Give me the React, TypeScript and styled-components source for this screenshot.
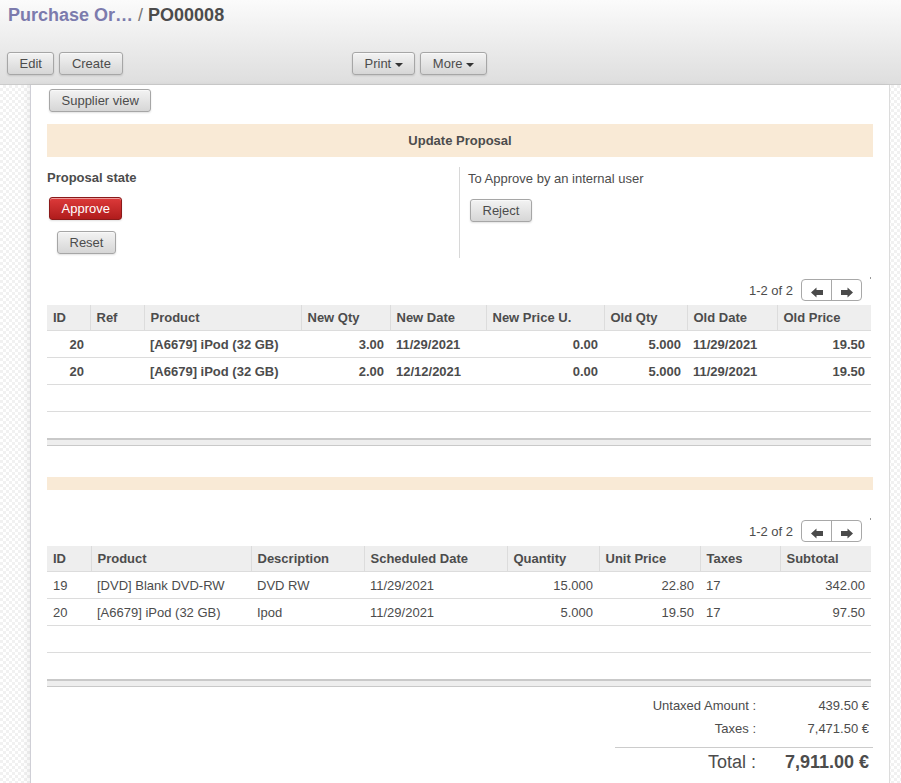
import styled, { createGlobalStyle } from 'styled-components'

const GlobalStyle = createGlobalStyle`
  html, body {
    margin: 0;
    padding: 0;
    background: #fff;
  }
  body {
    font-family: "Liberation Sans", Arial, Helvetica, sans-serif;
    font-size: 13px;
    color: #4c4c4c;
  }
`

interface Column {
  label: string
  width: number
  align?: 'left' | 'right'
}

const proposalColumns: Column[] = [
  { label: 'ID', width: 43, align: 'right' },
  { label: 'Ref', width: 54 },
  { label: 'Product', width: 157 },
  { label: 'New Qty', width: 89, align: 'right' },
  { label: 'New Date', width: 96 },
  { label: 'New Price U.', width: 118, align: 'right' },
  { label: 'Old Qty', width: 83, align: 'right' },
  { label: 'Old Date', width: 90 },
  { label: 'Old Price', width: 94, align: 'right' },
]

const proposalRows = [
  ['20', '', '[A6679] iPod (32 GB)', '3.00', '11/29/2021', '0.00', '5.000', '11/29/2021', '19.50'],
  ['20', '', '[A6679] iPod (32 GB)', '2.00', '12/12/2021', '0.00', '5.000', '11/29/2021', '19.50'],
]

const lineColumns: Column[] = [
  { label: 'ID', width: 44 },
  { label: 'Product', width: 160 },
  { label: 'Description', width: 113 },
  { label: 'Scheduled Date', width: 143 },
  { label: 'Quantity', width: 92, align: 'right' },
  { label: 'Unit Price', width: 101, align: 'right' },
  { label: 'Taxes', width: 80 },
  { label: 'Subtotal', width: 91, align: 'right' },
]

const lineRows = [
  ['19', '[DVD] Blank DVD-RW', 'DVD RW', '11/29/2021', '15.000', '22.80', '17', '342.00'],
  ['20', '[A6679] iPod (32 GB)', 'Ipod', '11/29/2021', '5.000', '19.50', '17', '97.50'],
]

function Arrow({ dir }: { dir: 'left' | 'right' }): JSX.Element {
  return (
    <svg width="12" height="11" viewBox="0 0 12 11">
      <path
        d={
          dir === 'left'
            ? 'M0 5.5 L5.5 0.5 L5.5 3 L12 3 L12 8 L5.5 8 L5.5 10.5 Z'
            : 'M12 5.5 L6.5 0.5 L6.5 3 L0 3 L0 8 L6.5 8 L6.5 10.5 Z'
        }
        fill="#4a4a4a"
      />
    </svg>
  )
}

function Pager({ spaced = false }: { spaced?: boolean }): JSX.Element {
  return (
    <PagerRow spaced={spaced}>
      <PagerText>1-2 of 2</PagerText>
      <PagerGroup>
        <PagerButton>
          <Arrow dir="left" />
        </PagerButton>
        <PagerButton withDivider>
          <Arrow dir="right" />
        </PagerButton>
      </PagerGroup>
      <PagerDot />
    </PagerRow>
  )
}

function ListTable({
  columns,
  rows,
  bold = false,
}: {
  columns: Column[]
  rows: string[][]
  bold?: boolean
}): JSX.Element {
  return (
    <Table>
      <colgroup>
        {columns.map((c) => (
          <col key={c.label} style={{ width: c.width }} />
        ))}
      </colgroup>
      <thead>
        <tr>
          {columns.map((c, i) => (
            <HeadCell key={c.label} first={i === 0}>
              {c.label}
            </HeadCell>
          ))}
        </tr>
      </thead>
      <tbody>
        {rows.map((r, ri) => (
          <tr key={ri}>
            {r.map((v, i) => (
              <Cell key={i} align={columns[i].align ?? 'left'} bold={bold}>
                {v}
              </Cell>
            ))}
          </tr>
        ))}
        <tr>
          <EmptyCell colSpan={columns.length} />
        </tr>
        <tr>
          <EmptyCell colSpan={columns.length} />
        </tr>
      </tbody>
      <tfoot>
        <tr>
          <FootCell colSpan={columns.length} />
        </tr>
      </tfoot>
    </Table>
  )
}

export default function App(): JSX.Element {
  return (
    <>
      <GlobalStyle />
      <ControlPanel>
        <Breadcrumb>
          <BreadcrumbLink>Purchase Or…</BreadcrumbLink>
          <BreadcrumbSep>/</BreadcrumbSep>
          <BreadcrumbCurrent>PO00008</BreadcrumbCurrent>
        </Breadcrumb>
        <ToolbarRow>
          <ButtonGroup>
            <Button>Edit</Button>
            <Button>Create</Button>
          </ButtonGroup>
          <ButtonGroup>
            <Button>
              Print <Caret />
            </Button>
            <Button>
              More <Caret />
            </Button>
          </ButtonGroup>
        </ToolbarRow>
      </ControlPanel>

      <Canvas>
        <Sheet>
          <SupplierButton>Supplier view</SupplierButton>

          <Band>Update Proposal</Band>

          <ProposalGroup>
            <ProposalLeft>
              <GroupTitle>Proposal state</GroupTitle>
              <Button variant="danger">Approve</Button>
              <ResetButton>Reset</ResetButton>
            </ProposalLeft>
            <ProposalRight>
              <StateText>To Approve by an internal user</StateText>
              <Button>Reject</Button>
            </ProposalRight>
          </ProposalGroup>

          <Pager />
          <ListTable columns={proposalColumns} rows={proposalRows} bold />

          <ThinBand />

          <Pager spaced />
          <ListTable columns={lineColumns} rows={lineRows} />

          <Totals>
            <TotalLabel>Untaxed Amount :</TotalLabel>
            <TotalValue>439.50 €</TotalValue>
            <TotalLabel>Taxes :</TotalLabel>
            <TotalValue>7,471.50 €</TotalValue>
            <TotalRule />
            <GrandLabel>Total :</GrandLabel>
            <GrandValue>7,911.00 €</GrandValue>
          </Totals>
        </Sheet>
      </Canvas>
    </>
  )
}

const ControlPanel = styled.header`
  height: 85px;
  box-sizing: border-box;
  background: linear-gradient(#fbfbfb, #dedede);
  border-bottom: 1px solid #cbcbcb;
  padding: 4px 7px 0;
`

const Breadcrumb = styled.div`
  display: flex;
  align-items: baseline;
  gap: 5px;
  font-size: 18px;
  line-height: 22px;
  padding-left: 1px;
`

const BreadcrumbLink = styled.span`
  color: #7c7bad;
  font-weight: bold;
`

const BreadcrumbSep = styled.span`
  color: #777;
`

const BreadcrumbCurrent = styled.span`
  color: #4c4c4c;
  font-weight: bold;
`

const ToolbarRow = styled.div`
  display: grid;
  grid-template-columns: 345px 1fr;
  margin-top: 26px;
`

const ButtonGroup = styled.div`
  display: flex;
  gap: 5px;
`

const Button = styled.button<{ variant?: 'default' | 'danger' }>`
  height: 23px;
  box-sizing: border-box;
  padding: 0 11.5px;
  border-radius: 3px;
  font-family: inherit;
  font-size: 13px;
  line-height: 21px;
  cursor: pointer;
  white-space: nowrap;
  align-self: flex-start;
  border: 1px solid ${({ variant }) => (variant === 'danger' ? '#8b1a1a' : '#a6a6a6')};
  color: ${({ variant }) => (variant === 'danger' ? '#fff' : '#4c4c4c')};
  background: ${({ variant }) =>
    variant === 'danger'
      ? 'linear-gradient(#dd3a3a, #b01c1c)'
      : 'linear-gradient(#f3f3f3, #d6d6d6)'};
  box-shadow: 0 1px 2px rgba(0, 0, 0, 0.12), inset 0 1px 0 rgba(255, 255, 255, 0.5);
`

const Caret = styled.span`
  display: inline-block;
  width: 0;
  height: 0;
  margin-left: 0;
  vertical-align: middle;
  border-left: 4px solid transparent;
  border-right: 4px solid transparent;
  border-top: 4px solid #333;
`

const Canvas = styled.main`
  display: flex;
  padding: 0 11px 0 30px;
  background-color: #fff;
  background-image: repeating-conic-gradient(#f1f1f1 0 25%, #fff 0 50%);
  background-size: 6px 6px;
  min-height: 698px;
`

const Sheet = styled.section`
  flex: 1;
  display: flex;
  flex-direction: column;
  background: #fff;
  border-left: 1px solid #cfcfd6;
  border-right: 1px solid #dcdcdc;
  box-shadow: -3px 0 6px rgba(0, 0, 0, 0.05);
  padding: 4px 16px 0;
`

const SupplierButton = styled(Button)`
  margin-left: 2px;
`

const Band = styled.div`
  margin-top: 12px;
  height: 33px;
  display: flex;
  align-items: center;
  justify-content: center;
  background: #f9ead6;
  font-weight: bold;
`

const ProposalGroup = styled.div`
  display: grid;
  grid-template-columns: 412px 1fr;
  margin-top: 10px;
  height: 91px;
`

const ProposalLeft = styled.div`
  display: flex;
  flex-direction: column;
  align-items: flex-start;
  gap: 11px;
  padding-top: 3px;

  & > button {
    margin-left: 2px;
  }
`

const GroupTitle = styled.div`
  font-weight: bold;
  line-height: 15px;
  margin-bottom: 1px;
`

const ResetButton = styled(Button)`
  && {
    margin-left: 10px;
  }
`

const ProposalRight = styled.div`
  border-left: 1px solid #d8d8d8;
  padding: 4px 0 0 8px;
  display: flex;
  flex-direction: column;
  align-items: flex-start;
  gap: 13px;

  & > button {
    margin-left: 2px;
  }
`

const StateText = styled.div`
  line-height: 15px;
`

const PagerRow = styled.div<{ spaced: boolean }>`
  display: flex;
  align-items: center;
  justify-content: flex-end;
  margin-top: ${({ spaced }) => (spaced ? '30px' : '21px')};
  margin-bottom: 4px;
  height: 22px;
  position: relative;
`

const PagerText = styled.span`
  margin-right: 8px;
`

const PagerGroup = styled.div`
  display: flex;
  border: 1px solid #a8a8a8;
  border-radius: 4px;
  margin-right: 11px;
  height: 22px;
  box-sizing: border-box;
  overflow: hidden;
  background: #fff;
`

const PagerButton = styled.span<{ withDivider?: boolean }>`
  width: 29px;
  display: flex;
  align-items: center;
  justify-content: center;
  padding-top: 4px;
  border-left: ${({ withDivider }) => (withDivider ? '1px solid #a8a8a8' : 'none')};
`

const PagerDot = styled.span`
  position: absolute;
  right: 2px;
  top: -2px;
  width: 1px;
  height: 2px;
  background: #999;
`

const Table = styled.table`
  width: 824px;
  border-collapse: collapse;
  table-layout: fixed;
`

const HeadCell = styled.th<{ first?: boolean }>`
  height: 25px;
  padding: 0 6px;
  background: #eee;
  text-align: left;
  font-weight: bold;
  border-left: ${({ first }) => (first ? 'none' : '1px solid #dcdcdc')};
  border-bottom: 1px solid #dcdcdc;
  white-space: nowrap;
  overflow: hidden;
`

const Cell = styled.td<{ align: 'left' | 'right'; bold: boolean }>`
  height: 26px;
  padding: 0 6px;
  text-align: ${({ align }) => align};
  font-weight: ${({ bold }) => (bold ? 'bold' : 'normal')};
  border-bottom: 1px solid #dcdcdc;
  white-space: nowrap;
`

const EmptyCell = styled.td`
  height: 26px;
  padding: 0;
  border-bottom: 1px solid #dcdcdc;
`

const FootCell = styled.td`
  height: 5px;
  background: #eee;
  border-top: 2px solid #c9c9c9;
  border-bottom: 1px solid #c9c9c9;
  padding: 0;
`

const ThinBand = styled.div`
  margin-top: 31px;
  height: 13px;
  background: #f9ead6;
`

const Totals = styled.div`
  display: grid;
  grid-template-columns: 1fr 117px;
  width: 258px;
  align-self: flex-end;
  margin-top: 11px;
  row-gap: 8px;
`

const TotalLabel = styled.div`
  text-align: right;
  line-height: 15px;
`

const TotalValue = styled.div`
  text-align: right;
  line-height: 15px;
  padding-right: 4px;
`

const TotalRule = styled.div`
  grid-column: 1 / -1;
  border-top: 1px solid #ccc;
  margin-top: 3px;
`

const GrandLabel = styled(TotalLabel)`
  font-size: 18px;
  line-height: 18px;
  margin-top: -3px;
`

const GrandValue = styled(TotalValue)`
  font-size: 18px;
  line-height: 18px;
  font-weight: bold;
  margin-top: -3px;
`
